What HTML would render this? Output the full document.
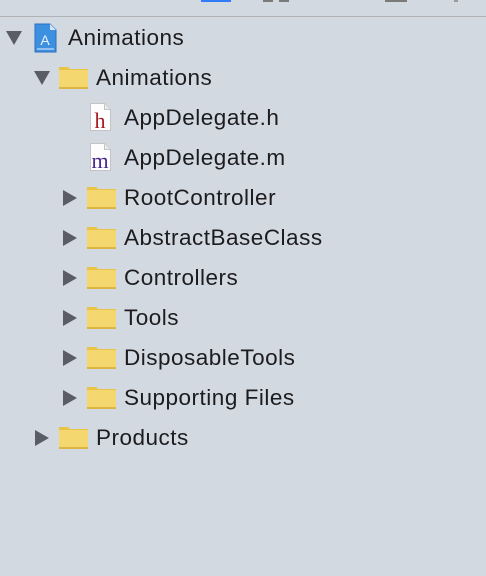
<!DOCTYPE html>
<html><head><style>
body{margin:0;width:486px;height:576px;background:#d3d9e0;position:relative;overflow:hidden;font-family:"Liberation Sans",sans-serif;}
.a{position:absolute;}
.t{position:absolute;font-size:22.5px;letter-spacing:0.5px;color:#1c1c1f;line-height:24px;}
.tri{position:absolute;width:0;height:0;}
.down{border-left:8px solid transparent;border-right:8px solid transparent;border-top:14px solid #5a5d65;}
.right{border-top:8px solid transparent;border-bottom:8px solid transparent;border-left:14px solid #5a5d65;}
.f{position:absolute;width:30px;height:24px;}
</style></head><body>
<div class="a" style="left:201px;top:0;width:30px;height:2px;background:#2f7cf6"></div>
<div class="a" style="left:263px;top:0;width:10px;height:2px;background:#7a7a7a"></div>
<div class="a" style="left:279px;top:0;width:10px;height:2px;background:#7a7a7a"></div>
<div class="a" style="left:385px;top:0;width:22px;height:2px;background:#7a7a7a"></div>
<div class="a" style="left:454px;top:0;width:4px;height:2px;background:#9a9a9a"></div>
<div class="a" style="left:0;top:16px;width:486px;height:1px;background:#b0b2b4"></div>

<svg width="0" height="0" style="position:absolute"><defs>
<g id="fold"><path d="M0 1 h9 l2 2 h18 v20 h-29z" fill="#e8c444"/><rect x="0" y="4" width="29" height="19" fill="#f4d76e"/><rect x="0" y="21" width="29" height="2" fill="#dcb640"/></g>
<g id="doc"><path d="M0.5 0.5 h14 l6 6 v21 h-20z" fill="#fdfdfd" stroke="#c4c4c4"/><path d="M14.5 0.5 v6 h6" fill="#e8e8e8" stroke="#c4c4c4"/></g>
</defs></svg>

<div class="tri down" style="left:6px;top:31px"></div>
<svg class="a" style="left:34px;top:23px" width="24" height="30"><path d="M1 1 h15 l6 6 v22 h-21z" fill="#3d8fe0" stroke="#2a6fc0"/><path d="M16 1 v6 h6" fill="#cfe4fa"/><text x="11" y="22" font-size="14" fill="#e8f3ff" text-anchor="middle" font-family="Liberation Sans">A</text><line x1="3" y1="26" x2="20" y2="26" stroke="#e8f3ff"/></svg>
<div class="t" style="left:68px;top:26px">Animations</div>
<div class="tri down" style="left:34px;top:71px"></div>
<svg class="f" style="left:59px;top:66px"><use href="#fold"/></svg>
<div class="t" style="left:96px;top:66px">Animations</div>

<svg class="a" style="left:90px;top:103px" width="22" height="29"><use href="#doc"/><text x="10" y="25" font-size="22" fill="#a51c24" text-anchor="middle" font-family="Liberation Serif">h</text></svg>
<div class="t" style="left:124px;top:106px">AppDelegate.h</div>
<svg class="a" style="left:90px;top:143px" width="22" height="29"><use href="#doc"/><text x="10" y="25" font-size="22" fill="#4a2a90" text-anchor="middle" font-family="Liberation Serif">m</text></svg>
<div class="t" style="left:124px;top:146px">AppDelegate.m</div>

<div class="tri right" style="left:63px;top:190px"></div><svg class="f" style="left:87px;top:186px"><use href="#fold"/></svg><div class="t" style="left:124px;top:186px">RootController</div>
<div class="tri right" style="left:63px;top:230px"></div><svg class="f" style="left:87px;top:226px"><use href="#fold"/></svg><div class="t" style="left:124px;top:226px">AbstractBaseClass</div>
<div class="tri right" style="left:63px;top:270px"></div><svg class="f" style="left:87px;top:266px"><use href="#fold"/></svg><div class="t" style="left:124px;top:266px">Controllers</div>
<div class="tri right" style="left:63px;top:310px"></div><svg class="f" style="left:87px;top:306px"><use href="#fold"/></svg><div class="t" style="left:124px;top:306px">Tools</div>
<div class="tri right" style="left:63px;top:350px"></div><svg class="f" style="left:87px;top:346px"><use href="#fold"/></svg><div class="t" style="left:124px;top:346px">DisposableTools</div>
<div class="tri right" style="left:63px;top:390px"></div><svg class="f" style="left:87px;top:386px"><use href="#fold"/></svg><div class="t" style="left:124px;top:386px">Supporting Files</div>
<div class="tri right" style="left:35px;top:430px"></div><svg class="f" style="left:59px;top:426px"><use href="#fold"/></svg><div class="t" style="left:96px;top:426px">Products</div>
</body></html>
